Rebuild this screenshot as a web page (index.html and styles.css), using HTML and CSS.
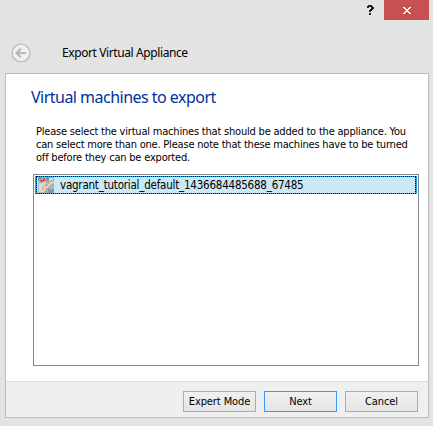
FILE: index.html
```html
<!DOCTYPE html>
<html lang="en">
<head>
<meta charset="utf-8">
<title>Export Virtual Appliance</title>
<link rel="stylesheet" href="styles.css">
</head>
<body>
<div class="window">
  <div class="titlebar">
    <svg class="help" width="7" height="11" viewBox="0 0 7 11" shape-rendering="crispEdges"><path fill="#222" d="M1 0h4v1h1v1h1v2h-1v1h-1v1h-1v1h-2v-2h1v-1h1v-2h-2v1h-2v-2h1zM2 8h2v2h-2z"/></svg>
    <button class="close" aria-label="Close"><svg width="8" height="7" viewBox="0 0 8 7" shape-rendering="crispEdges"><path fill="#fff" d="M0 0h2v1h1v1h2v-1h1v-1h2v1h-1v1h-1v1h-1v1h1v1h1v1h1v1h-2v-1h-1v-1h-2v1h-1v1h-2v-1h1v-1h1v-1h1v-1h-1v-1h-1v-1h-1z"/></svg></button>
  </div>
  <div class="header">
    <svg width="20" height="20" viewBox="0 0 20 20" fill="none"><circle cx="10" cy="10" r="8.9" fill="#efefef" stroke="#bcbcbc" stroke-width="1.4"/><path d="M15 10H6M9.8 5.8 5.6 10l4.2 4.2" stroke="#b5b5b5" stroke-width="2.1"/></svg>
    <span class="caption">Export Virtual Appliance</span>
  </div>
  <div class="panel">
    <div class="page">
      <h1>Virtual machines to export</h1>
      <p>Please select the virtual machines that should be added to the appliance. You<br>can select more than one. Please note that these machines have to be turned<br>off before they can be exported.</p>
      <div class="list">
        <div class="row">
          <div class="focus">
            <svg width="16" height="16" viewBox="0 0 16 16"><path fill="#a5b7ca" d="M0 0h16v16H0z"/><path fill="#d3dce5" d="M1 6l6 1 2 4-3 4H1zM10 1h5v2l-4 1z"/><path fill="#8199b3" d="M0 0h4v3H0zM8 0h3v4H8zM10 12h6v4h-6z"/><path fill="#c95a3e" d="M2 3h3V1h2v3H5v2H3z"/><path fill="#edc9bd" d="M3 5h5v2H4z"/><path d="M5 15c2-1 2-3 2-4L5 9M7 11c4 0 3-5 9-6" fill="none" stroke="#a98d69" stroke-width="3.4"/><path d="M4 15c3-1 3-3 3-4L5 9M7 11c4 0 3-5 9-6" fill="none" stroke="#edd5a5" stroke-width="2.3"/></svg>
            <span class="name">vagrant_tutorial_default_1436684485688_67485</span>
          </div>
        </div>
      </div>
    </div>
    <div class="footer">
      <button class="btn expert">Expert Mode</button>
      <button class="btn next">Next</button>
      <button class="btn">Cancel</button>
    </div>
  </div>
</div>
</body>
</html>
```
FILE: styles.css
```css
* { box-sizing: border-box; }
body { margin: 0; background: #e3e3e3; color: #000; font-family: "DejaVu Sans Condensed", sans-serif; font-size: 11px; }
button { font: inherit; padding: 0; margin: 0; }
svg { display: block; flex: none; }
.window { width: 433px; height: 426px; overflow: hidden; }
.titlebar { height: 20px; display: flex; justify-content: flex-end; padding-right: 4px; }
.help { margin: 5px 10px 0 0; }
.close { width: 45px; height: 20px; border: 0; background: #c75050; display: flex; align-items: center; justify-content: center; padding-top: 1px; }
.header { height: 53px; padding: 23px 0 0 11px; display: flex; gap: 31px; }
.caption { font-family: "Noto Sans", sans-serif; font-size: 12px; line-height: 20px; white-space: nowrap; letter-spacing: -0.4px; }
.panel { width: 424px; height: 345px; margin-left: 5px; border: 1px solid #bcbcbc; background: #efefef; }
.page { height: 307px; background: #fff; padding: 12px 9px 0 27px; }
h1 { margin: 0 0 0 -2px; font-family: "Noto Sans", sans-serif; font-weight: 400; font-size: 16px; line-height: 23px; color: #003399; white-space: nowrap; letter-spacing: -0.52px; }
p { margin: 16px 0 0 3px; line-height: 13px; white-space: nowrap; letter-spacing: -0.2px; }
.list { height: 192px; width: 386px; margin-top: 10px; border: 1px solid #828790; padding: 1px; }
.row { height: 18px; background: #26a0da; padding: 0 1px; }
.focus { height: 18px; border: 1px dotted #111; background: #cbe8f6 padding-box; display: flex; padding-left: 1px; gap: 6px; }
.name { line-height: 17px; white-space: nowrap; font-size: 11.5px; letter-spacing: -0.22px; }
.footer { height: 36px; border-top: 1px solid #dfdfdf; display: flex; justify-content: flex-end; gap: 8px; padding: 9px 10px 0 0; }
.btn { width: 73px; height: 21px; border: 1px solid #acacac; background: linear-gradient(#f0f0f0, #e5e5e5); color: #000; line-height: 18px; white-space: nowrap; letter-spacing: -0.1px; }
.next { border-color: #3399ff; }
```
